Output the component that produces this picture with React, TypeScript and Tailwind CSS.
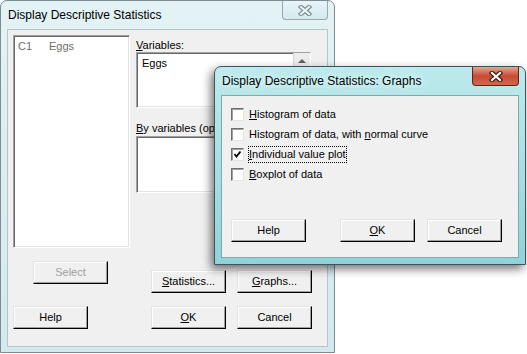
import type React from "react"

const Btn = ({
  children,
  className = "",
  disabled = false,
}: {
  children: React.ReactNode
  className?: string
  disabled?: boolean
}) => (
  <div
    className={`flex h-[23px] w-[75px] shrink-0 items-center justify-center border border-t-[#e3e3e3] border-l-[#e3e3e3] border-r-black border-b-black bg-[#f0f0f0] text-[11px] leading-none shadow-[inset_-1px_-1px_0_#a0a0a0,inset_1px_1px_0_#ffffff] ${
      disabled ? "text-[#a0a0a0]" : "text-black"
    } ${className}`}
  >
    {children}
  </div>
)

const CloseX = ({ active }: { active: boolean }) => (
  <svg width="14" height="11" viewBox="0 0 14 11">
    <path
      d="M3 2 L11 9 M11 2 L3 9"
      stroke={active ? "#3b1a12" : "#7d8b90"}
      strokeWidth="4.4"
      strokeLinecap="square"
    />
    <path
      d="M3 2 L11 9 M11 2 L3 9"
      stroke={active ? "#ffffff" : "#eef4f6"}
      strokeWidth="2.2"
      strokeLinecap="square"
    />
  </svg>
)

const Check = ({ checked = false }: { checked?: boolean }) => (
  <div className="flex h-[13px] w-[13px] shrink-0 items-center justify-center border border-t-[#6f6f6f] border-l-[#6f6f6f] border-r-[#e3e3e3] border-b-[#e3e3e3] bg-white shadow-[inset_1px_1px_0_#a0a0a0]">
    {checked && (
      <svg width="9" height="9" viewBox="0 0 9 9">
        <polyline points="1.5,4 3.5,6.5 7.5,1.5" fill="none" stroke="#000" strokeWidth="1.8" />
      </svg>
    )}
  </div>
)

const Sunken = ({ className = "", children }: { className?: string; children?: React.ReactNode }) => (
  <div
    className={`border border-t-[#a0a0a0] border-l-[#a0a0a0] border-r-white border-b-white bg-white shadow-[inset_1px_1px_0_#696969,inset_-1px_-1px_0_#e3e3e3] ${className}`}
  >
    {children}
  </div>
)

export default function App() {
  return (
    <div className="relative h-[354px] w-[527px] overflow-hidden bg-white font-['Liberation_Sans',Arial,sans-serif] text-black">
      {/* main dialog (inactive) */}
      <div className="relative flex h-[353px] w-[335px] flex-col rounded-t-[7px] border border-[#7a8d94] bg-linear-to-b from-[#e3f2f5] to-[#d3e9ee] px-[6px] pb-[5px]">
        <div className="flex h-[28px] items-center pl-[1px] text-[12px]">Display Descriptive Statistics</div>
        <div className="absolute top-0 right-[6px] flex h-[19px] w-[46px] items-center justify-center rounded-b-[4px] border border-t-0 border-[#95a8ae] bg-linear-to-b from-[#e8f4f7] to-[#d5e9ee]">
          <CloseX active={false} />
        </div>

        <div className="flex flex-1 flex-col border border-[#b3c6cc] bg-[#f0f0f0] pt-[5px] pl-[5px]">
          <div className="flex">
            <Sunken className="h-[213px] w-[117px] pt-[4px] pl-[4px]">
              <div className="flex text-[11px] leading-[13px] text-[#6d6d6d]">
                <span className="w-[31px]">C1</span>
                <span>Eggs</span>
              </div>
            </Sunken>
            <div className="ml-[6px] flex w-[175px] flex-col">
              <div className="mt-[4px] h-[13px] text-[11px] leading-[13px]">
                <u>V</u>ariables:
              </div>
              <Sunken className="flex h-[56px]">
                <div className="flex-1 pt-[4px] pl-[5px] text-[11px] leading-[13px]">Eggs</div>
                <div className="flex w-[17px] justify-center border-l border-[#d8d8d8] bg-[#ececec] pt-[6px]">
                  <div className="h-0 w-0 border-x-[4px] border-b-[4px] border-x-transparent border-b-[#606060]" />
                </div>
              </Sunken>
              <div className="mt-[14px] h-[13px] whitespace-nowrap text-[11px] leading-[13px]">
                <u>B</u>y variables (optional):
              </div>
              <Sunken className="mt-[1px] h-[57px]" />
            </div>
          </div>

          <div className="flex items-start">
            <Btn disabled className="mt-[13px] ml-[20px]">
              Select
            </Btn>
            <Btn className="mt-[22px] ml-[43px]">
              <span>
                <u>S</u>tatistics...
              </span>
            </Btn>
            <Btn className="mt-[22px] ml-[11px]">
              <span>
                <u>G</u>raphs...
              </span>
            </Btn>
          </div>

          <div className="mt-[13px] flex">
            <Btn>Help</Btn>
            <Btn className="ml-[63px]">
              <span>
                <u>O</u>K
              </span>
            </Btn>
            <Btn className="ml-[11px]">Cancel</Btn>
          </div>
        </div>
      </div>

      {/* graphs dialog (active window on top) */}
      <div className="absolute top-[66px] left-[214px] flex h-[199px] w-[312px] flex-col rounded-t-[7px] border border-[#3f5359] bg-linear-to-b from-[#bdeaec] via-[#a9dfe3] to-[#8fd3d8] px-[6px] pb-[6px] shadow-[-3px_4px_10px_rgba(0,0,0,0.55)]">
        <div className="flex h-[28px] items-center pl-[1px] text-[12px] [text-shadow:0_0_6px_#e8fbfb,0_0_10px_#e8fbfb]">
          Display Descriptive Statistics: Graphs
        </div>
        <div className="absolute top-0 right-[6px] flex h-[19px] w-[47px] items-center justify-center rounded-b-[4px] border border-t-0 border-[#5f2418] bg-linear-to-b from-[#e3a593] via-[#c64a31] to-[#d2684f]">
          <CloseX active />
        </div>

        <div className="flex flex-1 flex-col border border-[#7fa9b0] bg-[#f0f0f0] pt-[8px] pl-[9px] text-[11px] leading-[13px]">
          <div className="flex h-[20px] items-center">
            <Check />
            <span className="ml-[5px]">
              <u>H</u>istogram of data
            </span>
          </div>
          <div className="flex h-[20px] items-center">
            <Check />
            <span className="ml-[5px]">
              Histogram of data, with <u>n</u>ormal curve
            </span>
          </div>
          <div className="flex h-[20px] items-center">
            <Check checked />
            <span className="ml-[4px] border border-dotted border-black px-[0px] py-[1px]">
              <u>I</u>ndividual value plot
            </span>
          </div>
          <div className="flex h-[20px] items-center">
            <Check />
            <span className="ml-[5px]">
              <u>B</u>oxplot of data
            </span>
          </div>

          <div className="mt-[35px] flex">
            <Btn>Help</Btn>
            <Btn className="ml-[34px]">
              <span>
                <u>O</u>K
              </span>
            </Btn>
            <Btn className="ml-[12px]">Cancel</Btn>
          </div>
        </div>
      </div>
    </div>
  )
}
